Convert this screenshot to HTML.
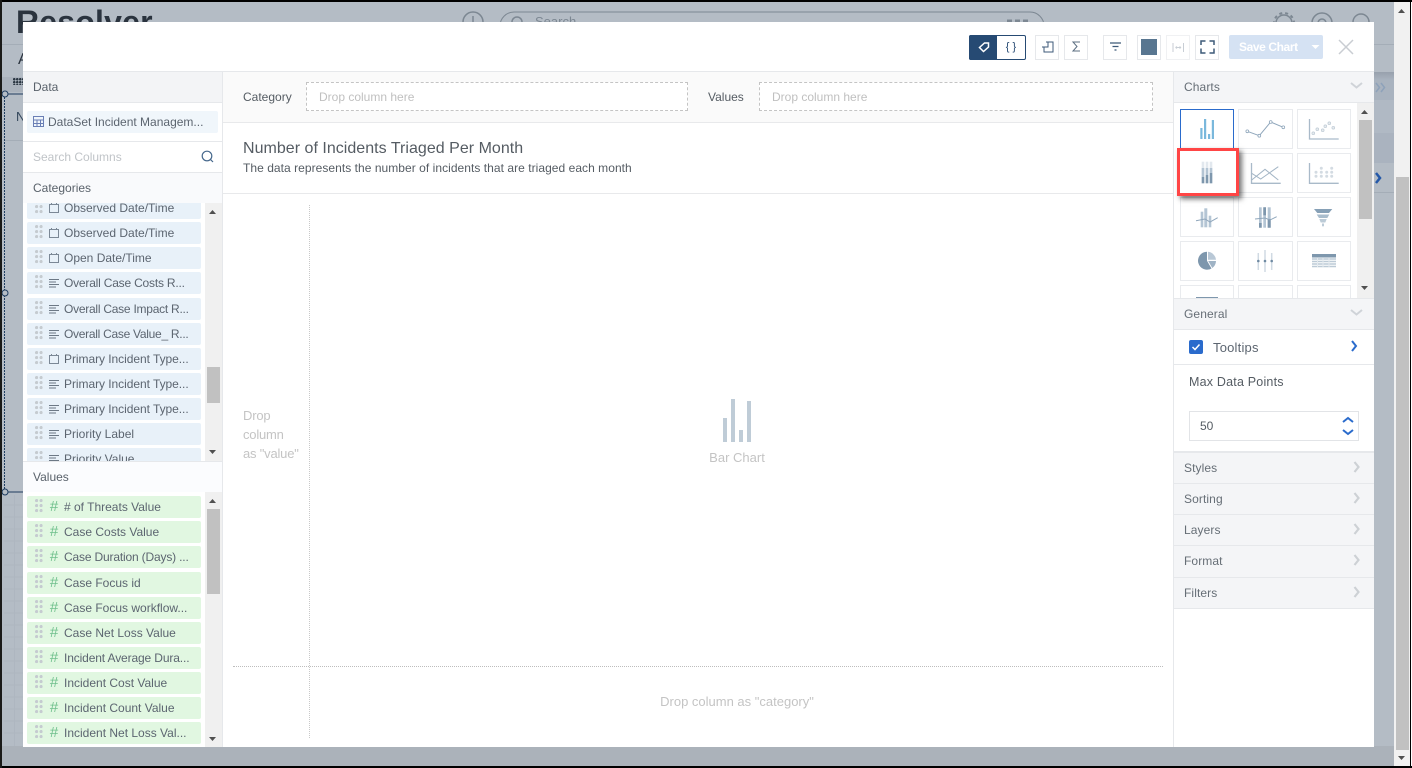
<!DOCTYPE html>
<html><head><meta charset="utf-8"><title>Chart</title>
<style>
html,body{margin:0;padding:0;width:1412px;height:768px;overflow:hidden;background:#fff;font-family:"Liberation Sans",sans-serif}
div,span{position:absolute;box-sizing:border-box}
svg{position:absolute;overflow:visible}
.t{white-space:nowrap;line-height:16px;height:16px;font-size:12px;color:#5c6570}
.r{left:4px;width:174px;height:22px;border-radius:2px}
.r .t{left:37px;top:3px}
.c{background:#e8f1f9}.g{background:#e1f7e1}
.d{left:8px;top:3px;width:8px;height:15px;background-image:radial-gradient(circle at 1.6px 1.6px,#c5cbd0 1.5px,transparent 1.7px);background-size:4.5px 5px}
.i{left:21px;top:5px;width:12px;height:12px}
.h{left:21px;font-size:15px;line-height:16px;color:#6fc08c;top:3px;height:16px;width:12px;text-align:center}
.tile{width:54px;height:40px;border:1px solid #e9ebee;background:#fff}
.tb{top:35px;width:24px;height:25px;border:1px solid #e6e8eb;background:#fff}
.ph{left:1174px;width:200px;background:#f4f5f7;border-bottom:1px solid #e6e8eb}
.ph .t{left:10px;top:7px;color:#666e76;letter-spacing:.1px}
</style></head><body>
<!-- page behind -->
<div style="left:0;top:0;width:1394px;height:766px;background:#b4bcc5"></div>
<div style="left:0;top:746px;width:1394px;height:20px;background:#abb2ba"></div>
<div style="left:0;top:44px;width:1394px;height:1px;background:#a4adb7"></div>
<div class="t" style="left:16px;top:4px;font-size:32px;line-height:36px;height:36px;font-weight:bold;color:#2a333e;letter-spacing:.2px">Resolver</div>
<svg style="left:0;top:0" width="1394" height="30" fill="none" stroke="#7c8792" stroke-width="1.5"><circle cx="473" cy="22" r="10"/><path d="M473 16v7"/><rect x="500" y="12" width="544" height="30" rx="14" stroke-width="1"/><circle cx="517" cy="22" r="5"/><circle cx="1284" cy="23" r="8"/><circle cx="1284" cy="23" r="10" stroke-dasharray="3 3" stroke-width="2"/><circle cx="1322" cy="23" r="10"/><circle cx="1322" cy="23" r="4"/><circle cx="1361" cy="22" r="8"/><path d="M1007 21h5M1015 21h5M1023 21h5" stroke-width="3" stroke="#7c8792"/></svg>
<div class="t" style="left:535px;top:14px;color:#7c8792;font-size:13px">Search</div>
<div class="t" style="left:18px;top:52px;font-size:16px;color:#2a333e">A</div>
<div style="left:2px;top:77px;width:21px;height:15px;background:#aab2bc"></div>
<div style="left:13px;top:78px;width:10px;height:7px;background-image:radial-gradient(circle at 1.2px 1.2px,#2c3844 1.2px,transparent 1.3px);background-size:3px 3px"></div>
<div class="t" style="left:16px;top:109px;font-size:13px;color:#33475c">N</div>
<div style="left:4px;top:140px;width:19px;height:1px;background:#a4adb7"></div>
<svg style="left:0;top:0" width="24" height="766" fill="#b4bcc5" stroke="#1f3d60"><path d="M5 94H23M5 492H23" /><path d="M4.5 94V492" stroke-dasharray="2 1"/><circle cx="5" cy="94" r="3"/><circle cx="5" cy="293" r="3"/><circle cx="5" cy="492" r="3"/><path d="M4 505H23M4 517H23M4 529H23M4 541H23M4 553H23M4 565H23M4 577H23M4 589H23M4 601H23M4 613H23M4 625H23M4 637H23M4 649H23M4 661H23M4 673H23M4 685H23M4 697H23M4 709H23M4 721H23M4 733H23M14.5 495V746" stroke="#aeb6c0" fill="none"/></svg>
<div style="left:1374px;top:72px;width:20px;height:28px;background:linear-gradient(#98a1ad,#a9b3bf 8px)"></div>
<div style="left:1374px;top:100px;width:20px;height:33px;background:#b0b9c4"></div>
<div style="left:1374px;top:133px;width:20px;height:30px;background:#aab3bf"></div>
<svg style="left:1374px;top:78px" width="20" height="110" fill="none"><path d="M2 5l3.500 4.500L2 14M7 5l3.500 4.500L7 14" stroke="#8ea2ba" stroke-width="1.500"/><path d="M2 95l4 5-4 5" stroke="#2458a8" stroke-width="2.500"/></svg>
<div style="left:1374px;top:192px;width:20px;height:1px;background:#a4adb7"></div>
<!-- page scrollbar -->
<div style="left:1394px;top:0;width:16px;height:766px;background:#f1f1f1"></div>
<div style="left:1396px;top:177px;width:13px;height:573px;background:#c1c1c1"></div>
<svg style="left:1394px;top:0" width="16" height="766" fill="#505050"><path d="M4 13l3.500-4 3.500 4zM4 756h7l-3.500 4z"/></svg>
<!-- frame -->
<div style="left:0;top:0;width:1412px;height:2px;background:#000"></div>
<div style="left:0;top:766px;width:1412px;height:2px;background:#000"></div>
<div style="left:0;top:0;width:2px;height:768px;background:#1a1a18"></div>
<div style="left:1410px;top:0;width:1px;height:768px;background:#000"></div>
<!-- modal -->
<div style="left:23px;top:22px;width:1351px;height:725px;background:#fff"></div>
<div style="left:23px;top:71px;width:1351px;height:1px;background:#e6e8eb"></div>
<!-- toolbar -->
<div style="left:969px;top:35px;width:57px;height:25px;border:1px solid #264a73;border-radius:2px;background:#fff"></div>
<div style="left:969px;top:35px;width:28px;height:25px;background:#264a73;border-radius:2px 0 0 2px"></div>
<svg style="left:978px;top:41px" width="12" height="12" fill="none" stroke="#fff" stroke-width="1.500"><path d="M1.500 6.500L6.500 2H10.500V6L5.500 10.500z"/></svg>
<div class="t" style="left:1003px;top:39px;width:16px;text-align:center;font-size:11px;color:#264a73">{ }</div>
<div class="tb" style="left:1035px"></div><div class="tb" style="left:1064px"></div><div class="tb" style="left:1103px"></div><div class="tb" style="left:1137px"></div><div class="tb" style="left:1166px;border-color:#f0f1f3"></div><div class="tb" style="left:1195px"></div>
<svg style="left:1035px;top:35px" width="190" height="25" fill="none" stroke="#3d5a78" stroke-width="1"><path d="M11 7H18V17H9V12M7 12H13V7"/><path d="M45 7H38L42 11.500L38 16H45" stroke="#5c6f82"/><path d="M75 8H86M77.500 11.500H83.500M79.500 15H81.500" stroke-width="1.300"/><path d="M138 8V17M148.500 8V17M140.500 12.500H146M140.500 12.500l1.500-1M140.500 12.500l1.500 1M146 12.500l-1.500-1M146 12.500l-1.500 1" stroke="#c8ced5"/><path d="M166 10V6H170.500M174.500 6H179V10M179 13.500V18H174.500M170.500 18H166V13.500" stroke-width="1.500"/></svg>
<div style="left:1141px;top:39px;width:16px;height:16px;background:#587690"></div>
<div style="left:1229px;top:35px;width:94px;height:24px;background:#d5e2f3;border-radius:2px"></div>
<div class="t" style="left:1239px;top:39px;color:#fff;font-weight:bold;letter-spacing:-.4px">Save Chart</div>
<svg style="left:1311px;top:44px" width="10" height="6" fill="#fff"><path d="M0.500 1h8l-4 4z"/></svg>
<svg style="left:1338px;top:39px" width="16" height="16" stroke="#c9cdd2" stroke-width="1.500"><path d="M1 1L15 15M15 1L1 15"/></svg>
<!-- left panel -->
<div style="left:222px;top:72px;width:1px;height:675px;background:#e6e8eb"></div>
<div style="left:23px;top:72px;width:199px;height:31px;background:#f3f4f6;border-bottom:1px solid #e6e8eb"></div>
<div class="t" style="left:33px;top:79px;color:#5a626b">Data</div>
<div style="left:27px;top:111px;width:191px;height:22px;background:#f0f6fb;border-radius:2px"></div>
<svg style="left:33px;top:116px" width="12" height="12" fill="none" stroke="#6a7fb5"><rect x=".5" y=".5" width="10" height="10"/><path d="M.5 4H10.500M.5 7.500H10.500M4 4V10.500M7.500 4V10.500"/></svg>
<div class="t" style="left:48px;top:114px">DataSet Incident Managem...</div>
<div style="left:23px;top:141px;width:199px;height:1px;background:#e6e8eb"></div>
<div class="t" style="left:33px;top:149px;color:#c0c4c8">Search Columns</div>
<svg style="left:201px;top:150px" width="13" height="13" fill="none" stroke="#46688c" stroke-width="1.200"><circle cx="6" cy="6" r="4.800"/><path d="M9.500 9.500L12 12"/></svg>
<div style="left:23px;top:172px;width:199px;height:31px;background:#f9fafc;border-top:1px solid #e6e8eb"></div>
<div class="t" style="left:33px;top:180px;color:#5a626b">Categories</div>
<div style="left:23px;top:203px;width:199px;height:258px;overflow:hidden;background:#fff">
<div style="left:182px;top:0;width:17px;height:258px;background:#f0f0f0"></div>
<div style="left:184px;top:164px;width:13px;height:36px;background:#c1c1c1"></div>
<svg style="left:182px;top:0" width="17" height="258" fill="#505050"><path d="M4 11l3.500-4 3.500 4zM4 247h7l-3.500 4z"/></svg>
<div class="r c" style="top:-6px"><span class="d"></span><svg class="i" fill="none" stroke="#7b8896"><rect x="1.500" y="2.500" width="9" height="8"/><path d="M3.500 1v2M8.500 1v2"/></svg><span class="t">Observed Date/Time</span></div>
<div class="r c" style="top:19px"><span class="d"></span><svg class="i" fill="none" stroke="#7b8896"><rect x="1.500" y="2.500" width="9" height="8"/><path d="M3.500 1v2M8.500 1v2"/></svg><span class="t">Observed Date/Time</span></div>
<div class="r c" style="top:44px"><span class="d"></span><svg class="i" fill="none" stroke="#7b8896"><rect x="1.500" y="2.500" width="9" height="8"/><path d="M3.500 1v2M8.500 1v2"/></svg><span class="t">Open Date/Time</span></div>
<div class="r c" style="top:69px"><span class="d"></span><svg class="i" fill="none" stroke="#6c7885"><path d="M1 2.500H11M1 5H8M1 7.500H11M1 10H8"/></svg><span class="t" style="letter-spacing:-.2px">Overall Case Costs R...</span></div>
<div class="r c" style="top:95px"><span class="d"></span><svg class="i" fill="none" stroke="#6c7885"><path d="M1 2.500H11M1 5H8M1 7.500H11M1 10H8"/></svg><span class="t" style="letter-spacing:-.25px">Overall Case Impact R...</span></div>
<div class="r c" style="top:120px"><span class="d"></span><svg class="i" fill="none" stroke="#6c7885"><path d="M1 2.500H11M1 5H8M1 7.500H11M1 10H8"/></svg><span class="t" style="letter-spacing:-.28px">Overall Case Value_ R...</span></div>
<div class="r c" style="top:145px"><span class="d"></span><svg class="i" fill="none" stroke="#7b8896"><rect x="1.500" y="2.500" width="9" height="8"/><path d="M3.500 1v2M8.500 1v2"/></svg><span class="t" style="letter-spacing:-.05px">Primary Incident Type...</span></div>
<div class="r c" style="top:170px"><span class="d"></span><svg class="i" fill="none" stroke="#6c7885"><path d="M1 2.500H11M1 5H8M1 7.500H11M1 10H8"/></svg><span class="t" style="letter-spacing:-.05px">Primary Incident Type...</span></div>
<div class="r c" style="top:195px"><span class="d"></span><svg class="i" fill="none" stroke="#6c7885"><path d="M1 2.500H11M1 5H8M1 7.500H11M1 10H8"/></svg><span class="t" style="letter-spacing:-.05px">Primary Incident Type...</span></div>
<div class="r c" style="top:220px"><span class="d"></span><svg class="i" fill="none" stroke="#6c7885"><path d="M1 2.500H11M1 5H8M1 7.500H11M1 10H8"/></svg><span class="t">Priority Label</span></div>
<div class="r c" style="top:245px"><span class="d"></span><svg class="i" fill="none" stroke="#6c7885"><path d="M1 2.500H11M1 5H8M1 7.500H11M1 10H8"/></svg><span class="t">Priority Value</span></div>
</div>
<div style="left:23px;top:461px;width:199px;height:31px;background:#fbfcfe;border-top:1px solid #e6e8eb"></div>
<div class="t" style="left:33px;top:469px;color:#5a626b">Values</div>
<div style="left:23px;top:492px;width:199px;height:255px;overflow:hidden;background:#fff">
<div style="left:182px;top:0;width:17px;height:255px;background:#f0f0f0"></div>
<div style="left:184px;top:17px;width:13px;height:85px;background:#c1c1c1"></div>
<svg style="left:182px;top:0" width="17" height="255" fill="#505050"><path d="M4 11l3.500-4 3.500 4zM4 245h7l-3.500 4z"/></svg>
<div class="r g" style="top:4px"><span class="d"></span><span class="h">#</span><span class="t">#&nbsp;of Threats Value</span></div>
<div class="r g" style="top:29px"><span class="d"></span><span class="h">#</span><span class="t">Case Costs Value</span></div>
<div class="r g" style="top:54px"><span class="d"></span><span class="h">#</span><span class="t" style="letter-spacing:-.17px">Case Duration (Days) ...</span></div>
<div class="r g" style="top:80px"><span class="d"></span><span class="h">#</span><span class="t">Case Focus id</span></div>
<div class="r g" style="top:105px"><span class="d"></span><span class="h">#</span><span class="t">Case Focus workflow...</span></div>
<div class="r g" style="top:130px"><span class="d"></span><span class="h">#</span><span class="t">Case Net Loss Value</span></div>
<div class="r g" style="top:155px"><span class="d"></span><span class="h">#</span><span class="t" style="letter-spacing:-.13px">Incident Average Dura...</span></div>
<div class="r g" style="top:180px"><span class="d"></span><span class="h">#</span><span class="t">Incident Cost Value</span></div>
<div class="r g" style="top:205px"><span class="d"></span><span class="h">#</span><span class="t">Incident Count Value</span></div>
<div class="r g" style="top:230px"><span class="d"></span><span class="h">#</span><span class="t">Incident Net Loss Val...</span></div>
</div>
<!-- center -->
<div style="left:223px;top:72px;width:950px;height:51px;background:#fafafa;border-bottom:1px solid #e8e9eb"></div>
<div class="t" style="left:243px;top:89px;color:#555c63">Category</div>
<div style="left:306px;top:82px;width:382px;height:29px;border:1px dashed #c4c4c4;background:#fff"></div>
<div class="t" style="left:319px;top:89px;color:#c0c0c0">Drop column here</div>
<div class="t" style="left:708px;top:89px;color:#555c63">Values</div>
<div style="left:759px;top:82px;width:394px;height:29px;border:1px dashed #c4c4c4;background:#fff"></div>
<div class="t" style="left:772px;top:89px;color:#c0c0c0">Drop column here</div>
<div class="t" style="left:243px;top:139px;height:20px;line-height:20px;font-size:16px;color:#555c63;letter-spacing:.025px">Number of Incidents Triaged Per Month</div>
<div class="t" style="left:243px;top:160px;color:#555c63;letter-spacing:.045px">The data represents the number of incidents that are triaged each month</div>
<div style="left:223px;top:193px;width:950px;height:1px;background:#e8e9eb"></div>
<div style="left:309px;top:205px;width:1px;height:533px;border-left:1px dotted #c8c8c8"></div>
<div style="left:233px;top:666px;width:930px;height:1px;border-top:1px dotted #bdbdbd"></div>
<div class="t" style="left:243px;top:406px;color:#c4c4c4;font-size:13px;letter-spacing:-.2px;line-height:19px;height:57px;white-space:normal;width:66px">Drop<br>column<br>as "value"</div>
<svg style="left:723px;top:399px" width="28" height="43" fill="#bfccd7"><rect x="0" y="19" width="4" height="24"/><rect x="8" y="0" width="4" height="43"/><rect x="16" y="31" width="4" height="12"/><rect x="24" y="2" width="4" height="41"/></svg>
<div class="t" style="left:687px;top:450px;width:100px;text-align:center;color:#c4c4c4;font-size:13px">Bar Chart</div>
<div class="t" style="left:637px;top:694px;width:200px;text-align:center;color:#c4c4c4;font-size:13px">Drop column as "category"</div>
<!-- right panel -->
<div style="left:1173px;top:72px;width:1px;height:675px;background:#e6e8eb"></div>
<div class="ph" style="top:72px;height:31px"><span class="t">Charts</span></div>
<div style="left:1174px;top:103px;width:200px;height:195px;overflow:hidden;background:#fff">
<div style="left:183px;top:0;width:17px;height:195px;background:#f0f0f0"></div>
<div style="left:185px;top:17px;width:13px;height:99px;background:#c1c1c1"></div>
<svg style="left:183px;top:0" width="17" height="195" fill="#505050"><path d="M4 11l3.500-4 3.500 4zM4 183h7l-3.500 4z"/></svg>
<div class="tile" style="left:6px;top:6px;border-color:#2a6bcc"></div><div class="tile" style="left:64px;top:6px;width:55px"></div><div class="tile" style="left:123px;top:6px"></div>
<div class="tile" style="left:64px;top:50px;width:55px"></div><div class="tile" style="left:123px;top:50px"></div>
<div class="tile" style="left:6px;top:94px"></div><div class="tile" style="left:64px;top:94px;width:55px"></div><div class="tile" style="left:123px;top:94px"></div>
<div class="tile" style="left:6px;top:138px"></div><div class="tile" style="left:64px;top:138px;width:55px"></div><div class="tile" style="left:123px;top:138px"></div>
<div class="tile" style="left:6px;top:182px"></div><div class="tile" style="left:64px;top:182px;width:55px"></div><div class="tile" style="left:123px;top:182px"></div>
<!-- icons: coordinates page-offset -->
<svg style="left:-1174px;top:-103px" width="1412" height="400" fill="none">
<g fill="#7ab8dc"><rect x="1200.300" y="128" width="2.200" height="11"/><rect x="1204" y="119" width="2.200" height="20"/><rect x="1208" y="134" width="2.200" height="5"/><rect x="1211.800" y="120" width="2.200" height="19"/></g>
<path d="M1247.300 131.300L1259.300 135.700L1270.700 122L1283.300 127.300" stroke="#8fa6bb"/><g fill="#fff" stroke="#8fa6bb" stroke-width=".8"><circle cx="1247.300" cy="131.300" r="1.400"/><circle cx="1259.300" cy="135.700" r="1.400"/><circle cx="1270.700" cy="122" r="1.400"/><circle cx="1283.300" cy="127.300" r="1.400"/></g>
<path d="M1309.500 119V139H1338.700" stroke="#a9bac9" stroke-width="1.300"/><g fill="#e6ebef" stroke="#c0ccd6" stroke-width=".7"><circle cx="1313.300" cy="133.300" r="1.400"/><circle cx="1317.300" cy="129.300" r="1.400"/><circle cx="1322.700" cy="130.300" r="1.400"/><circle cx="1325.300" cy="126.300" r="1.400"/><circle cx="1329.300" cy="123.300" r="1.400"/><circle cx="1333.300" cy="127.700" r="1.400"/></g>
<path d="M1251.500 163V183.300H1280.700" stroke="#a9bac9" stroke-width="1.300"/><path d="M1251.700 180L1265 169.300L1278.300 180M1251.700 173.300L1260.700 179L1278.300 166.700" stroke="#a3b5c5"/>
<path d="M1309.500 163V183.300H1338.700" stroke="#a9bac9" stroke-width="1.300"/><g fill="#d3dbe2"><circle cx="1321.300" cy="168.300" r="1.500"/><circle cx="1331.700" cy="168.300" r="1.500"/><circle cx="1316" cy="172.300" r="1.500"/><circle cx="1321.300" cy="172.300" r="1.500"/><circle cx="1326.700" cy="172.300" r="1.500"/><circle cx="1331.700" cy="172.300" r="1.500"/><circle cx="1316" cy="176.300" r="1.500"/><circle cx="1321.300" cy="176.300" r="1.500"/><circle cx="1326.700" cy="176.300" r="1.500"/><circle cx="1331.700" cy="176.300" r="1.500"/></g>
<g fill="#b4c5d4"><rect x="1200.700" y="211.700" width="2.600" height="15.600"/><rect x="1204.300" y="208.300" width="3" height="19"/><rect x="1208.700" y="215.700" width="2.600" height="11.600"/></g><path d="M1196 220.700L1205 219L1210 222L1217.700 217.700" stroke="#8fa6bb"/>
<g fill="#b4c5d4"><rect x="1259" y="207.300" width="2.700" height="20.400"/><rect x="1263.300" y="207.300" width="2.700" height="20.400"/><rect x="1267.700" y="207.300" width="3" height="20.400"/></g><g fill="#7e97ad"><rect x="1259" y="223" width="2.700" height="4.700"/><rect x="1263.300" y="207.300" width="2.700" height="8"/><rect x="1267.700" y="219" width="3" height="8.700"/></g><path d="M1255 219L1265 218L1270 220L1276.700 216.700" stroke="#8fa6bb"/>
<path d="M1314 209H1332.300L1329 213H1317.300z" fill="#86a0b6"/><path d="M1316.700 214.500H1329.300L1327.300 218H1319z" fill="#a9bdcd"/><path d="M1319.300 219H1326.700L1325.300 222.500H1320.700z" fill="#bccbd7"/><rect x="1322" y="223.500" width="2" height="2.800" fill="#bccbd7"/>
<path d="M1207 260.700V251.700A9 9 0 1 0 1211.500 268.500z" fill="#7e97ad"/><path d="M1208 259.700V251.800A9 9 0 0 1 1216 259.700z" fill="#b9c8d6"/><path d="M1208.200 261H1216A9 9 0 0 1 1212.300 268z" fill="#9fb3c5"/>
<path d="M1258.300 253V270M1265 250V272M1271.700 253V270" stroke="#d0dae3" stroke-width="1.500"/><g fill="#6f8aa3"><circle cx="1258.300" cy="261" r="1.300"/><circle cx="1265" cy="261" r="1.300"/><circle cx="1271.700" cy="261" r="1.300"/></g>
<rect x="1312" y="254" width="24" height="3.500" fill="#7e97ad"/><path d="M1312 259H1336M1312 261.500H1336M1312 264H1336M1312 266.500H1336" stroke="#bccad6" stroke-width="1.500"/><path d="M1317.500 258V267.500M1323 258V267.500M1329 258V267.500" stroke="#e3e9ee"/>
<rect x="1196" y="297" width="22" height="1" fill="#7e97ad"/>
</svg>
</div>
<!-- highlighted tile -->
<div style="left:1177px;top:148px;width:62px;height:48px;background:#fff;border:3px solid #ff4545;box-shadow:3px 3px 5px rgba(0,0,0,.55)"></div>
<svg style="left:1177px;top:148px" width="62" height="48"><g fill="#e2e8ee"><rect x="24.700" y="13.700" width="2.600" height="21.600"/><rect x="28.700" y="13.700" width="2.600" height="21.600"/><rect x="32.700" y="13.700" width="2.600" height="21.600"/></g><g fill="#b3c4d3"><rect x="24.700" y="20" width="2.600" height="9"/><rect x="28.700" y="20" width="2.600" height="7"/><rect x="32.700" y="20" width="2.600" height="5"/></g><g fill="#7e97ad"><rect x="24.700" y="29" width="2.600" height="6.300"/><rect x="28.700" y="27" width="2.600" height="8.300"/><rect x="32.700" y="25" width="2.600" height="10.300"/></g></svg>
<div class="ph" style="top:298px;height:32px;border-top:1px solid #e6e8eb"><span class="t" style="top:7px">General</span></div>
<svg style="left:1350px;top:82px" width="13" height="8" fill="none" stroke="#cfd3d8" stroke-width="2"><path d="M1 1l5.500 4.500L12 1"/></svg>
<svg style="left:1350px;top:309px" width="13" height="8" fill="none" stroke="#cfd3d8" stroke-width="2"><path d="M1 1l5.500 4.500L12 1"/></svg>
<div style="left:1189px;top:340px;width:14px;height:14px;background:#2a6bcc;border-radius:2px"></div>
<svg style="left:1189px;top:340px" width="14" height="14" fill="none" stroke="#fff" stroke-width="1.500"><path d="M3.500 7l2.500 2.500L10.500 4.500"/></svg>
<div class="t" style="left:1213px;top:340px;font-size:13px;color:#5c6570;letter-spacing:.2px">Tooltips</div>
<svg style="left:1351px;top:340px" width="7" height="12" fill="none" stroke="#2a6bcc" stroke-width="2"><path d="M1 1l4 5-4 5"/></svg>
<div style="left:1174px;top:364px;width:200px;height:1px;background:#e6e8eb"></div>
<div class="t" style="left:1189px;top:374px;color:#555c63;font-size:12.500px;letter-spacing:.2px">Max Data Points</div>
<div style="left:1189px;top:411px;width:170px;height:30px;border:1px solid #e2e4e7;background:#fff"></div>
<div class="t" style="left:1200px;top:418px;color:#555c63">50</div>
<svg style="left:1342px;top:416px" width="12" height="20" fill="none" stroke="#2a6bcc" stroke-width="2"><path d="M1 6l5-4 5 4M1 14l5 4 5-4"/></svg>
<div class="ph" style="top:451px;height:33px;border-top:2px solid #e6e8eb"><span class="t" style="top:7px">Styles</span></div>
<div class="ph" style="top:484px;height:31px"><span class="t">Sorting</span></div>
<div class="ph" style="top:515px;height:31px"><span class="t">Layers</span></div>
<div class="ph" style="top:546px;height:32px"><span class="t">Format</span></div>
<div class="ph" style="top:578px;height:31px"><span class="t">Filters</span></div>
<svg style="left:1353px;top:460px" width="9" height="140" fill="none" stroke="#cdd1d5" stroke-width="2.200"><path d="M1.500 2l4 5-4 5M1.500 33l4 5-4 5M1.500 64l4 5-4 5M1.500 95l4 5-4 5M1.500 127l4 5-4 5"/></svg>
</body></html>
